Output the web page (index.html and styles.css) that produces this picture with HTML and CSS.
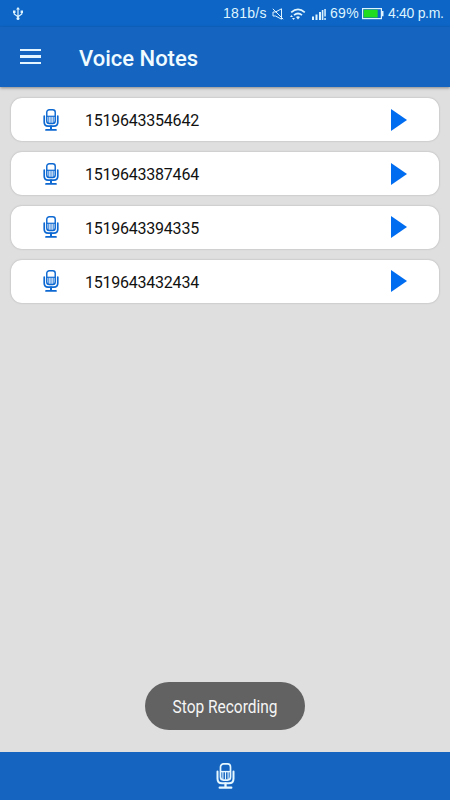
FILE: index.html
```html
<!DOCTYPE html>
<html lang="en">
<head>
<meta charset="utf-8">
<title>Voice Notes</title>
<link rel="stylesheet" href="styles.css">
</head>
<body>
<svg width="0" height="0" class="defs">
  <symbol id="mic" viewBox="0 0 18 26">
    <g fill="none" stroke="currentColor" stroke-width="1.7" stroke-linecap="round">
      <rect x="4" y="0.9" width="10" height="16.2" rx="3"/>
      <path d="M1 8.5v7.2q0 4.6 4.6 4.6h6.8q4.6 0 4.6-4.6V8.5" stroke-width="2"/>
      <path d="M9 20.5v4M3.2 24.7h11.6" stroke-width="2.3"/>
      <path d="M4 8.6h10" stroke-width="1.4" stroke-linecap="butt"/>
      <path d="M6.4 9v7.5M9 9v7.5M11.6 9v7.5" stroke-width="1.1" stroke-linecap="butt"/>
    </g>
  </symbol>
  <symbol id="play" viewBox="0 0 16 22"><path d="M0 0v22L16 11z" fill="currentColor"/></symbol>
</svg>
<div class="screen">
  <div class="status">
    <svg class="usb" viewBox="0 0 10 13"><g fill="none" stroke="currentColor" stroke-width="1.2"><path d="M5 1v11M1.2 4.5V7L5 9.7 8.8 7V4.5"/></g><path d="M5 0l2 2.6H3zM0 3.6h2.5V6H0zM7.6 3.6H10V6H7.6z" fill="currentColor"/><circle cx="5" cy="11.5" r="1.5" fill="currentColor"/></svg>
    <span class="speed">181b/s</span>
    <svg class="mute" viewBox="0 0 12 12"><path d="M1 4h2.5L9.5.8v10.4L3.5 8H1zM.8.8l10.4 10.4" fill="none" stroke="currentColor"/></svg>
    <svg class="wifi" viewBox="0 0 16 12"><path d="M1.2 4.3Q8-1.7 14.8 4.3M4 7.2q4-3.4 8 0" fill="none" stroke="currentColor" stroke-width="1.7"/><path d="M6 9q2-1.5 4 0l-2 2.5zM0 9l1.5-2L3 9zM2 10h3l-1.5 2z" fill="currentColor"/></svg>
    <svg class="signal" viewBox="0 0 14 12"><path d="M0 8.5h2V12H0zM3.5 6.5h2V12h-2zM7 4h2v8H7zM9.8 2h1.6v10H9.8zM12.3 1h1.5v7.5h-1.5zM12.3 10h1.5v2h-1.5z" fill="currentColor"/></svg>
    <span class="percent">69%</span>
    <svg class="battery" viewBox="0 0 22 12"><rect x=".6" y=".6" width="18.8" height="10" fill="none" stroke="currentColor" stroke-width="1.2"/><path d="M20 3h1.5v5.2H20z" fill="currentColor"/><path d="M1.7 1.7h14v7.8h-14z" fill="#20dd20"/></svg>
    <span class="time">4:40 p.m.</span>
  </div>
  <header class="appbar">
    <div class="menu"><i></i><i></i><i></i></div>
    <h1>Voice Notes</h1>
  </header>
  <main class="list">
    <div class="card"><svg class="mic"><use href="#mic"/></svg><span class="name">1519643354642</span><svg class="play"><use href="#play"/></svg></div>
    <div class="card"><svg class="mic"><use href="#mic"/></svg><span class="name">1519643387464</span><svg class="play"><use href="#play"/></svg></div>
    <div class="card"><svg class="mic"><use href="#mic"/></svg><span class="name">1519643394335</span><svg class="play"><use href="#play"/></svg></div>
    <div class="card"><svg class="mic"><use href="#mic"/></svg><span class="name">1519643432434</span><svg class="play"><use href="#play"/></svg></div>
  </main>
  <div class="toast"><span>Stop Recording</span></div>
  <footer class="record"><svg><use href="#mic"/></svg></footer>
</div>
</body>
</html>
```
FILE: styles.css
```css
* { box-sizing: border-box; }
body { margin: 0; font-family: Roboto, sans-serif; }
.defs { position: absolute; }
.screen { position: relative; width: 450px; height: 800px; background: #dfdfdf; display: flex; flex-direction: column; overflow: hidden; }
svg { display: block; flex: none; }
.status { height: 27px; background: #0d65c5; color: #def4ff; display: flex; align-items: center; padding: 0 6px 0 13px; font: 14px/27px "Liberation Sans", sans-serif; white-space: nowrap; }
.usb { width: 10px; height: 13px; }
.speed { margin-left: auto; width: 44px; letter-spacing: .3px; }
.mute { width: 12px; height: 12px; margin-left: 5px; }
.wifi { width: 16px; height: 12px; margin-left: 6px; }
.signal { width: 14px; height: 12px; margin-left: 6px; }
.percent { width: 29px; margin-left: 4px; letter-spacing: .3px; }
.battery { width: 22px; height: 12px; margin-left: 3px; }
.time { width: 56px; margin-left: 4px; letter-spacing: -.3px; }
.appbar { height: 60px; background: #1565c0; color: #f0fbff; display: flex; align-items: center; padding-left: 20px; box-shadow: 0 1px 3px rgba(0,0,0,.4); }
.menu { width: 21px; height: 15px; margin-bottom: 1px; display: flex; flex-direction: column; justify-content: space-between; }
.menu i { height: 2.4px; background: #e4f5ff; }
h1 { margin: 3px 0 0 38px; font-size: 22px; font-weight: 500; line-height: 30px; white-space: nowrap; }
.list { flex: 1; padding: 11.4px 11px 0; display: flex; flex-direction: column; gap: 10.8px; }
.card { height: 43px; border-radius: 11px; background: #fff; box-shadow: 0 0 2px rgba(0,0,0,.25); display: flex; align-items: center; padding: 0 32px; }
.mic { width: 16px; height: 22px; color: #0d68d2; }
.name { margin: 2px 0 0 26px; font-size: 16px; letter-spacing: -.23px; color: #111; }
.play { width: 16px; height: 22px; margin-left: auto; color: #006cf0; }
.toast { position: absolute; left: 145px; top: 682px; width: 160px; height: 48px; border-radius: 24px; background: #626262; color: #f5f5f5; display: flex; align-items: center; justify-content: center; font-size: 18px; white-space: nowrap; }
.toast span { transform: scaleX(.86); }
.record { height: 48px; background: #1565c0; color: #e6f7ff; display: flex; justify-content: center; align-items: center; }
.record svg { width: 19px; height: 26px; }
```
